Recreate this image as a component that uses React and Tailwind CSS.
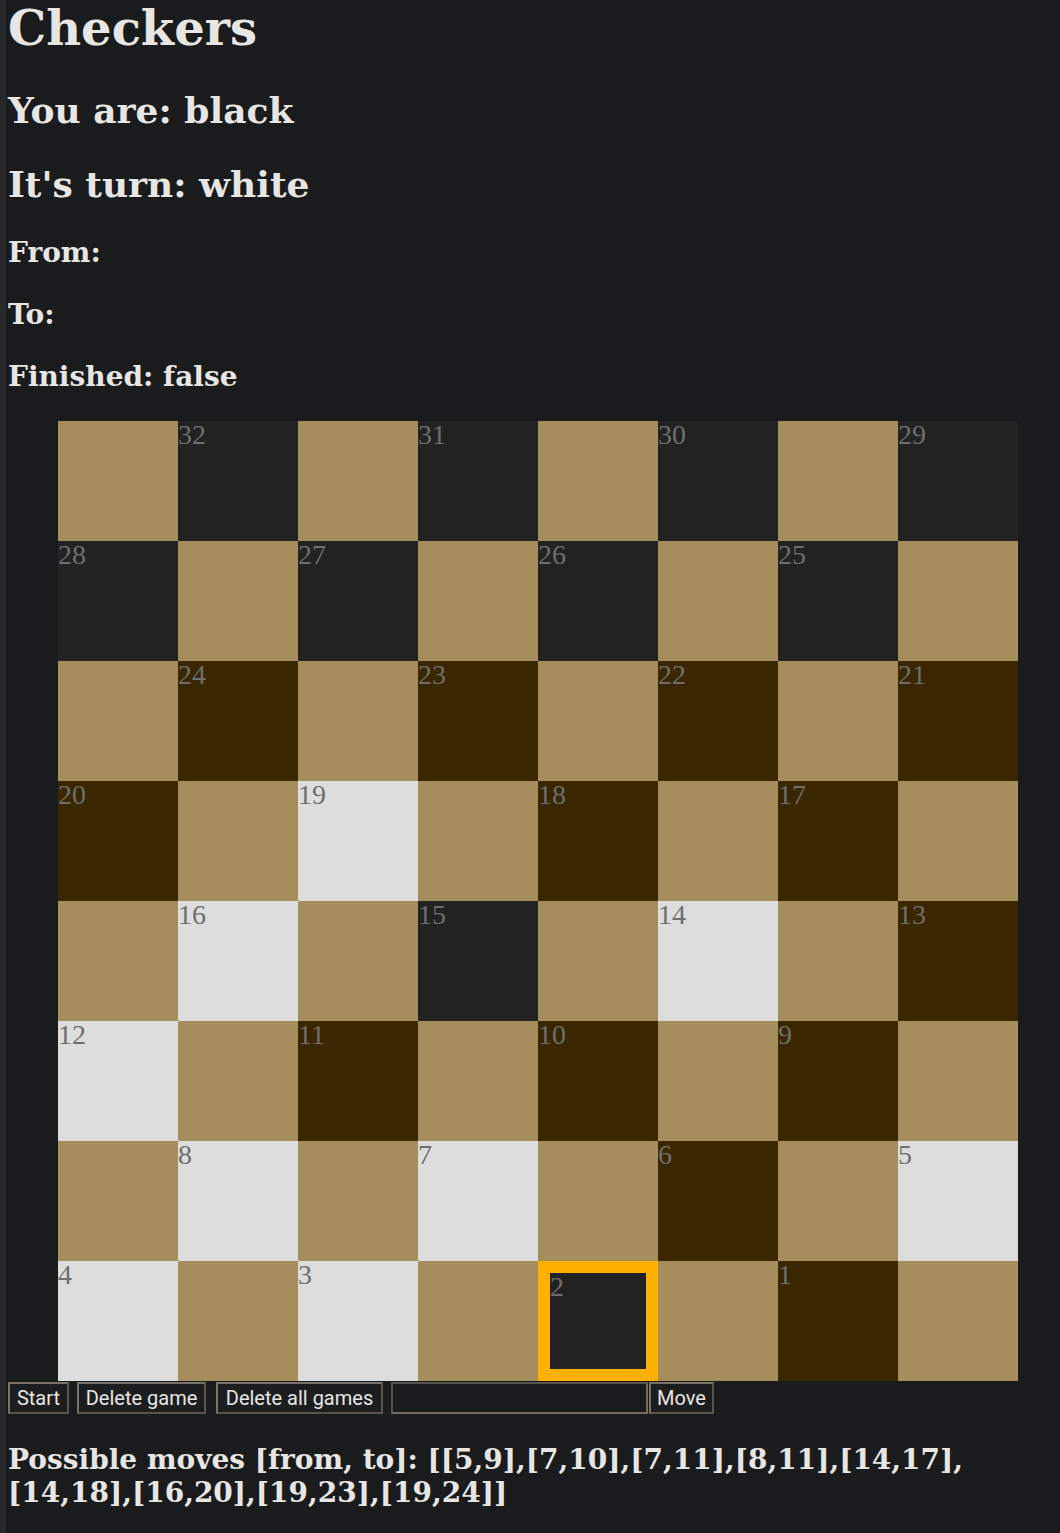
import React from 'react'

const WHITE = [19, 16, 14, 12, 8, 7, 5, 4, 3]
const BLACK = [24, 23, 22, 21, 20, 18, 17, 13, 11, 10, 9, 6, 1]
const SELECTED = 2

const MOVES = '[[5,9],[7,10],[7,11],[8,11],[14,17],[14,18],[16,20],[19,23],[19,24]]'

function Cell({ row, col }) {
    // light squares are never playable
    if ((row + col) % 2 === 0) {
        return <div className="h-[120px] bg-[#a68d5c]"></div>
    }

    const num = 32 - row * 4 - Math.floor(col / 2)
    let cls = 'bg-[#222222]'
    if (WHITE.includes(num)) cls = 'bg-[#dddddd]'
    if (BLACK.includes(num)) cls = 'bg-[#3a2700]'
    if (num === SELECTED) cls = 'bg-[#222222] border-[12px] border-[#ffb000]'

    return (
        <div className={`h-[120px] ${cls}`}>
            <span className="font-['Liberation_Serif',serif] text-[28px] leading-none text-[#6e6e6e]">
                {num}
            </span>
        </div>
    )
}

function Button({ children, className = '' }) {
    return (
        <button
            className={`h-[32px] border-2 border-t-[#7a7266] border-l-[#7a7266] border-b-[#5a544b] border-r-[#5a544b] bg-[#1c1d1f] text-[20px] leading-[28px] text-[#e8e6e3] font-['Roboto',sans-serif] flex items-center justify-center ${className}`}
        >
            {children}
        </button>
    )
}

export default function App() {
    const rows = [0, 1, 2, 3, 4, 5, 6, 7]

    return (
        <div className="min-h-screen bg-[#1a1b1d] border-l-[6px] border-l-[#28292a] pl-[2px] pb-[24px] text-[#e8e6e3] font-['DejaVu_Serif',serif]">
            {/* Header info */}
            <h1 className="text-[48px] leading-[56px] font-bold">Checkers</h1>
            <h2 className="mt-[33px] text-[36px] leading-[42px] font-bold">You are: black</h2>
            <h2 className="mt-[32px] text-[36px] leading-[42px] font-bold">It's turn: white</h2>
            <h3 className="mt-[31px] text-[28px] leading-[33px] font-bold">From: </h3>
            <h3 className="mt-[29px] text-[28px] leading-[33px] font-bold">To: </h3>
            <h3 className="mt-[29px] text-[28px] leading-[33px] font-bold">Finished: false</h3>

            {/* Board */}
            <div className="mt-[28px] ml-[50px] w-[960px] grid grid-cols-8">
                {rows.map((r) =>
                    rows.map((c) => <Cell key={`${r}-${c}`} row={r} col={c} />)
                )}
            </div>

            {/* Controls */}
            <div className="mt-px flex items-start">
                <Button className="w-[61px]">Start</Button>
                <Button className="ml-[8px] w-[129px]">Delete game</Button>
                <Button className="ml-[10px] w-[167px]">Delete all games</Button>
                <input
                    type="text"
                    className="ml-[8px] h-[32px] w-[257px] border-2 border-t-[#57524a] border-l-[#57524a] border-b-[#736b5e] border-r-[#736b5e] bg-[#1a1b1d] outline-none"
                />
                <Button className="ml-[1px] w-[65px]">Move</Button>
            </div>

            <h3 className="mt-[29px] text-[28px] leading-[33px] font-bold">
                Possible moves [from, to]: {MOVES}
            </h3>
        </div>
    )
}
